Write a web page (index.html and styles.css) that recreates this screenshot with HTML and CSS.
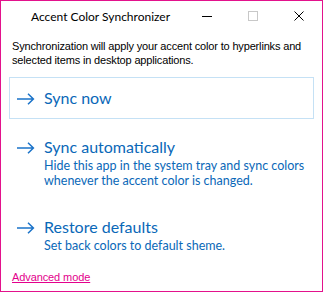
FILE: index.html
```html
<!DOCTYPE html>
<html lang="en">
<head>
  <meta charset="UTF-8" />
  <title>Accent Color Synchronizer</title>
  <link rel="stylesheet" href="styles.css">
</head>
<body>
  <div class="window">
    <div class="titlebar">
      <span class="title">Accent Color Synchronizer</span>
      <div class="caption-buttons">
        <button class="caption-btn">
          <svg width="10" height="10" viewBox="0 0 10 10"><path d="M0 5.5h10" stroke="#000" stroke-width="1"/></svg>
        </button>
        <button class="caption-btn">
          <svg width="10" height="10" viewBox="0 0 10 10"><rect x="0.5" y="0.5" width="9" height="9" fill="none" stroke="#c8c8c8" stroke-width="1"/></svg>
        </button>
        <button class="caption-btn">
          <svg width="10" height="10" viewBox="0 0 10 10"><path d="M0.5 0.5l9 9M9.5 0.5l-9 9" stroke="#000" stroke-width="1"/></svg>
        </button>
      </div>
    </div>

    <div class="content">
      <p class="intro">Synchronization will apply your accent color to hyperlinks and selected items in desktop applications.</p>

      <div class="commands">
        <a class="command focused" href="#">
          <svg class="arrow" width="18" height="12" viewBox="0 0 18 12"><path d="M0 6h16.5M11 0.8l5.4 5.2-5.4 5.2" fill="none" stroke="#1a73c9" stroke-width="1.5"/></svg>
          <span class="command-text">
            <span class="command-title">Sync now</span>
          </span>
        </a>
        <a class="command" href="#">
          <svg class="arrow" width="18" height="12" viewBox="0 0 18 12"><path d="M0 6h16.5M11 0.8l5.4 5.2-5.4 5.2" fill="none" stroke="#1a73c9" stroke-width="1.5"/></svg>
          <span class="command-text">
            <span class="command-title">Sync automatically</span>
            <span class="command-note">Hide this app in the system tray and sync colors<br>whenever the accent color is changed.</span>
          </span>
        </a>
        <a class="command" href="#">
          <svg class="arrow" width="18" height="12" viewBox="0 0 18 12"><path d="M0 6h16.5M11 0.8l5.4 5.2-5.4 5.2" fill="none" stroke="#1a73c9" stroke-width="1.5"/></svg>
          <span class="command-text">
            <span class="command-title">Restore defaults</span>
            <span class="command-note">Set back colors to default sheme.</span>
          </span>
        </a>
      </div>

      <a class="advanced" href="#">Advanced mode</a>
    </div>
  </div>
</body>
</html>
```

FILE: styles.css
```css
body {
  margin: 0;
  padding: 0;
  background: #fff;
  font-family: 'Liberation Sans', Arial, sans-serif;
}

.window {
  box-sizing: border-box;
  width: 323px;
  height: 292px;
  border: 1px solid #e3128c;
  background: #fff;
  display: flex;
  flex-direction: column;
}

.titlebar {
  height: 30px;
  display: flex;
  align-items: center;
}

.title {
  flex: 1;
  padding-left: 30px;
  font-family: Lato, sans-serif;
  font-size: 12px;
  color: #000;
}

.caption-buttons {
  display: flex;
  height: 100%;
}

.caption-btn {
  width: 46px;
  height: 100%;
  border: none;
  background: transparent;
  padding: 0;
  display: flex;
  align-items: center;
  justify-content: center;
}

.content {
  flex: 1;
  padding: 8px 8px 0 11px;
  display: flex;
  flex-direction: column;
}

.intro {
  margin: 0;
  font-size: 11px;
  line-height: 14px;
  letter-spacing: -0.16px;
  color: #000;
}

.commands {
  margin-top: 10px;
  margin-left: -3px;
  display: flex;
  flex-direction: column;
  gap: 7px;
}

.command {
  display: flex;
  align-items: flex-start;
  gap: 9px;
  padding: 10px 8px 10px 7px;
  border: 1px solid transparent;
  text-decoration: none;
  color: #0a68b8;
  font-family: Lato, sans-serif;
}

.command.focused {
  border-color: #c5e1f5;
}

.arrow {
  margin-top: 5px;
  flex-shrink: 0;
}

.command-text {
  display: flex;
  flex-direction: column;
}

.command-title {
  font-size: 16px;
  line-height: 20px;
}

.command-note {
  margin-top: 1px;
  font-size: 12.5px;
  line-height: 15px;
}

.advanced {
  margin-top: auto;
  margin-bottom: 8px;
  font-size: 11px;
  letter-spacing: -0.1px;
  color: #e3008c;
}
```
